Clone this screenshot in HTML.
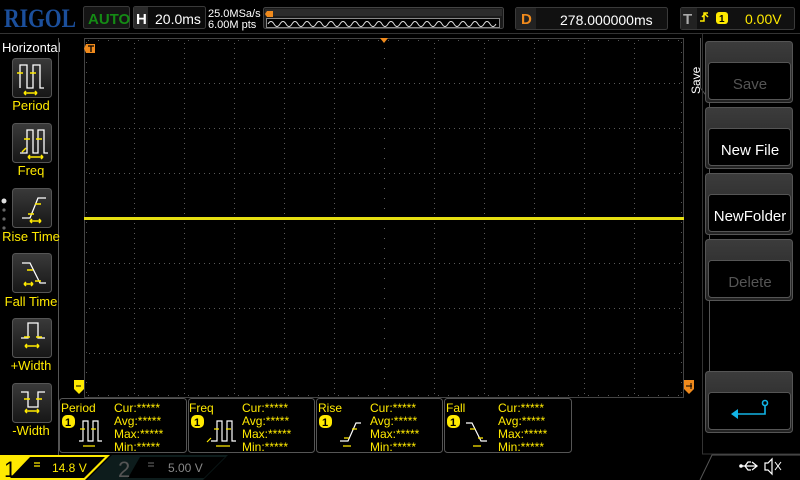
<!DOCTYPE html>
<html><head><meta charset="utf-8"><style>
html,body{margin:0;padding:0;background:#000;width:800px;height:480px;overflow:hidden}
svg{display:block}
</style></head><body>
<svg width="800" height="480" viewBox="0 0 800 480" xmlns="http://www.w3.org/2000/svg" font-family="Liberation Sans, sans-serif">
<defs>
<linearGradient id="btn" x1="0" y1="0" x2="0" y2="1"><stop offset="0" stop-color="#3a3a3a"/><stop offset="1" stop-color="#161616"/></linearGradient>
<linearGradient id="rbtn" x1="0" y1="0" x2="0" y2="1"><stop offset="0" stop-color="#3c3c3c"/><stop offset="1" stop-color="#222"/></linearGradient>
</defs>
<rect width="800" height="480" fill="#000"/>
<!-- top bar -->
<text x="4" y="27" style="font-family:'Liberation Serif',serif" font-weight="bold" font-size="26" fill="#1b4f9c" textLength="72" lengthAdjust="spacingAndGlyphs">RIGOL</text>
<rect x="83.5" y="6.5" width="46" height="22" rx="2" fill="#151515" stroke="#3a3a3a"/>
<text x="88" y="24" font-size="15" font-weight="bold" fill="#148b14">AUTO</text>
<rect x="133.5" y="6.5" width="72" height="22" rx="2" fill="#0a0a0a" stroke="#3a3a3a"/>
<rect x="134" y="7" width="14" height="21" fill="#2a2a2a"/>
<text x="136" y="24" font-size="15" font-weight="bold" fill="#fff">H</text>
<text x="155" y="24" font-size="14" fill="#fff">20.0ms</text>
<text x="208" y="17" font-size="11" fill="#fff">25.0MSa/s</text>
<text x="208" y="28" font-size="11" fill="#fff">6.00M pts</text>
<rect x="263.5" y="7.5" width="240" height="21" rx="2" fill="#1a1a1a" stroke="#444"/>
<rect x="265" y="9" width="237" height="7" fill="#2b2b2b"/>
<path d="M267 11h6v6h-6l-2-3z" fill="#f08a1c"/>
<rect x="266.5" y="18.5" width="233" height="9" fill="#000" stroke="#888"/>
<path d="M268 24 q3 -5 6 0 t6 0 t6 0 t6 0 t6 0 t6 0 t6 0 t6 0 t6 0 t6 0 t6 0 t6 0 t6 0 t6 0 t6 0 t6 0 t6 0 t6 0 t6 0 t6 0 t6 0 t6 0 t6 0 t6 0 t6 0 t6 0 t6 0 t6 0 t6 0 t6 0 t6 0 t6 0 t6 0 t6 0 t6 0 t6 0 t6 0 t6 0" fill="none" stroke="#ddd" stroke-width="1"/>
<rect x="515.5" y="7.5" width="152" height="22" rx="2" fill="#111" stroke="#3a3a3a"/>
<rect x="516" y="8" width="20" height="21" fill="#222"/>
<text x="521" y="24" font-size="15" font-weight="bold" fill="#f08a1c">D</text>
<text x="560" y="25" font-size="14" fill="#fff">278.000000ms</text>
<rect x="680.5" y="7.5" width="114" height="22" rx="2" fill="#111" stroke="#3a3a3a"/>
<rect x="681" y="8" width="16" height="21" fill="#222"/>
<text x="683" y="24" font-size="15" font-weight="bold" fill="#aaa">T</text>
<path d="M700 21h4v-8h4 M702 17l3-3 3 3" fill="none" stroke="#ffea00" stroke-width="1.5"/>
<rect x="716" y="12" width="12" height="12" rx="3" fill="#ffea00"/>
<text x="719" y="22" font-size="10" font-weight="bold" fill="#000">1</text>
<text x="745" y="24" font-size="14" fill="#ffea00">0.00V</text>
<line x1="0" y1="33.5" x2="800" y2="33.5" stroke="#333"/>
<!-- left menu -->
<text x="2" y="52" font-size="13" fill="#fff">Horizontal</text>
<line x1="58.5" y1="38" x2="58.5" y2="455" stroke="#555"/>
<g fill="url(#btn)" stroke="#555">
<rect x="12.5" y="58.5" width="39" height="39" rx="3"/>
<rect x="12.5" y="123.5" width="39" height="39" rx="3"/>
<rect x="12.5" y="188.5" width="39" height="39" rx="3"/>
<rect x="12.5" y="253.5" width="39" height="39" rx="3"/>
<rect x="12.5" y="318.5" width="39" height="39" rx="3"/>
<rect x="12.5" y="383.5" width="39" height="39" rx="3"/>
</g>
<g fill="none" stroke="#fff" stroke-width="1.3">
<path d="M20 88v-23h7v23h6v-23h7v23h4"/>
<path d="M20 153h7v-23h6v23h5v-23h6v23h4"/>
<path d="M22 218h8l8-20h8"/>
<path d="M22 263h8l10 20h6"/>
<path d="M21 338h7v-15h10v15h7"/>
<path d="M21 392h7v15h10v-15h7"/>
</g>
<g fill="none" stroke="#ffea00" stroke-width="1.5">
<path d="M17 73h6M30 73h6M24 93h13M24 93l2-2M24 93l2 2M37 93l-2-2M37 93l-2 2"/>
<path d="M24 139h6M36 139h6M28 157h15M28 157l2-2M28 157l2 2M43 157l-2-2M43 157l-2 2M22 152l4-4"/>
<path d="M35 204h6M28 214h6M30 221h11M30 221l2-2M30 221l2 2M41 221l-2-2M41 221l-2 2"/>
<path d="M27 270h6M35 281h6M24 284h9M24 284l2-2M24 284l2 2M33 284l-2-2M33 284l-2 2"/>
<path d="M24 337h6M36 337h6M25 346h14M25 346l2-2M25 346l2 2M39 346l-2-2M39 346l-2 2"/>
<path d="M24 399h6M36 399h6M25 411h14M25 411l2-2M25 411l2 2M39 411l-2-2M39 411l-2 2"/>
</g>
<g font-size="13" fill="#ffea00" text-anchor="middle">
<text x="31" y="110">Period</text><text x="31" y="175">Freq</text><text x="31" y="241">Rise Time</text>
<text x="31" y="306">Fall Time</text><text x="31" y="370">+Width</text><text x="31" y="435">-Width</text>
</g>
<circle cx="4" cy="201" r="2.5" fill="#ddd"/><circle cx="4" cy="210" r="1.6" fill="#666"/><circle cx="4" cy="219" r="1.6" fill="#666"/><circle cx="4" cy="228" r="1.6" fill="#666"/>
<!-- grid -->
<g stroke="#5a5a5a" stroke-width="1" stroke-dasharray="1 4">
<path d="M134.5 38v360M184.5 38v360M234.5 38v360M284.5 38v360M334.5 38v360M434.5 38v360M484.5 38v360M534.5 38v360M584.5 38v360M634.5 38v360"/>
<path d="M84 83.5h600M84 128.5h600M84 173.5h600M84 263.5h600M84 308.5h600M84 353.5h600"/>
</g>
<g stroke="#666" stroke-width="1" stroke-dasharray="1 9">
<path d="M384.5 38v360M84 218.5h600"/>
</g>
<g stroke="#555" stroke-width="1" stroke-dasharray="1 9" stroke-dashoffset="-4">
<path d="M84 40.5h600M84 395.5h600"/>
<path d="M86.5 38v360M681.5 38v360"/>
</g>
<rect x="84.5" y="38.5" width="599" height="359" fill="none" stroke="#444"/>
<rect x="84" y="217" width="600" height="3" fill="#e6df12"/>
<path d="M86 44h9v9h-9l-2-4.5z" fill="#f08a1c"/>
<path d="M88 46h6M91 46v6" stroke="#000" stroke-width="1.3"/>
<path d="M380 38h8l-4 5z" fill="#f08a1c"/>
<path d="M74 380h10v9l-5 5l-5-5z" fill="#ffea00"/>
<path d="M76 386h5" stroke="#000"/>
<path d="M684 380h10v9l-5 5l-5-5z" fill="#f08a1c"/>
<path d="M686 386h6M691 383v6" stroke="#000"/>
<!-- right panel -->
<path d="M700.5 38v50l9 12v320" fill="none" stroke="#555"/>
<path d="M702.5 34v420h98" fill="none" stroke="#333"/>
<text transform="translate(700,94) rotate(-90)" font-size="12" fill="#fff">Save</text>
<g stroke="#555">
<rect x="705.5" y="41.5" width="87" height="61" rx="3" fill="url(#rbtn)"/>
<rect x="708.5" y="62.5" width="82" height="37" rx="3" fill="#000"/>
<rect x="705.5" y="107.5" width="87" height="61" rx="3" fill="url(#rbtn)"/>
<rect x="708.5" y="128.5" width="82" height="37" rx="3" fill="#000"/>
<rect x="705.5" y="173.5" width="87" height="61" rx="3" fill="url(#rbtn)"/>
<rect x="708.5" y="194.5" width="82" height="37" rx="3" fill="#000"/>
<rect x="705.5" y="239.5" width="87" height="61" rx="3" fill="url(#rbtn)"/>
<rect x="708.5" y="260.5" width="82" height="37" rx="3" fill="#000"/>
<rect x="705.5" y="371.5" width="87" height="61" rx="3" fill="url(#rbtn)"/>
<rect x="708.5" y="392.5" width="82" height="37" rx="3" fill="#000"/>
</g>
<g font-size="15" text-anchor="middle">
<text x="750" y="89" fill="#555">Save</text>
<text x="750" y="155" fill="#fff">New File</text>
<text x="750" y="221" fill="#fff">NewFolder</text>
<text x="750" y="287" fill="#555">Delete</text>
</g>
<path d="M765 405v9h-28" fill="none" stroke="#12b4e6" stroke-width="1.6"/>
<circle cx="765" cy="403" r="2.5" fill="none" stroke="#12b4e6" stroke-width="1.6"/>
<path d="M731 414l7-5v10z" fill="#12b4e6"/>
<!-- measurement boxes -->
<g fill="#000" stroke="#555">
<rect x="59.5" y="398.5" width="127" height="54" rx="3"/>
<rect x="188.5" y="398.5" width="126" height="54" rx="3"/>
<rect x="316.5" y="398.5" width="126" height="54" rx="3"/>
<rect x="444.5" y="398.5" width="127" height="54" rx="3"/>
</g>
<g font-size="12" fill="#ffea00">
<text x="61" y="412">Period</text><text x="189" y="412">Freq</text><text x="318" y="412">Rise</text><text x="446" y="412">Fall</text>
<text x="114" y="412">Cur:*****</text><text x="114" y="425">Avg:*****</text><text x="114" y="438">Max:*****</text><text x="114" y="451">Min:*****</text>
<text x="242" y="412">Cur:*****</text><text x="242" y="425">Avg:*****</text><text x="242" y="438">Max:*****</text><text x="242" y="451">Min:*****</text>
<text x="370" y="412">Cur:*****</text><text x="370" y="425">Avg:*****</text><text x="370" y="438">Max:*****</text><text x="370" y="451">Min:*****</text>
<text x="498" y="412">Cur:*****</text><text x="498" y="425">Avg:*****</text><text x="498" y="438">Max:*****</text><text x="498" y="451">Min:*****</text>
</g>
<g fill="#ffea00">
<rect x="62" y="415" width="13" height="13" rx="5"/><rect x="191" y="415" width="13" height="13" rx="5"/>
<rect x="319" y="415" width="13" height="13" rx="5"/><rect x="447" y="415" width="13" height="13" rx="5"/>
</g>
<g font-size="11" font-weight="bold" fill="#000"><text x="65" y="426">1</text><text x="194" y="426">1</text><text x="322" y="426">1</text><text x="450" y="426">1</text></g>
<g fill="none" stroke="#fff" stroke-width="1.2">
<path d="M79 441h4v-20h5v20h5v-20h5v20h4"/>
<path d="M211 441h6v-20h5v20h5v-20h5v20h4"/>
<path d="M340 441h8l8-18h5"/>
<path d="M466 423h6l9 18h6"/>
</g>
<g fill="none" stroke="#ffea00" stroke-width="1.2">
<path d="M80 429h5M91 429h5M83 446h12"/>
<path d="M214 429h5M226 429h5M216 446h14M207 442l4-4"/>
<path d="M352 429h5M344 438h5M343 446h8"/>
<path d="M470 429h5M478 438h5M473 446h8"/>
</g>
<!-- bottom bar -->
<path d="M0 455h110l-25 25H0z" fill="#ffea00"/>
<path d="M30 457h75l-21 21H10z" fill="#000"/>
<text x="4" y="477" font-size="22" fill="#000">1</text>
<path d="M34 463h6M34 466h6" stroke="#ffea00" stroke-width="1.2"/>
<text x="52" y="472" font-size="12" fill="#ffea00">14.8 V</text>
<path d="M112 455h116l-25 25H87z" fill="#0d1c1c"/>
<path d="M140 457h85l-21 21H128z" fill="#000"/>
<text x="118" y="477" font-size="22" fill="#555">2</text>
<path d="M148 463h6M148 466h6" stroke="#555" stroke-width="1.2"/>
<text x="168" y="472" font-size="12" fill="#888">5.00 V</text>
<path d="M700 480l12-25h88" fill="none" stroke="#555"/>
<path d="M741 466h16M752 462l5 4-5 4M745 466l3-4h3M745 466l3 4h3" fill="none" stroke="#fff" stroke-width="1.3"/>
<circle cx="741" cy="466" r="1.8" fill="#fff"/>
<path d="M765 463h3l4-4v15l-4-4h-3z" fill="none" stroke="#fff" stroke-width="1.2"/>
<path d="M775 462l6 8M781 462l-6 8" stroke="#fff" stroke-width="1"/>
</svg>
</body></html>
